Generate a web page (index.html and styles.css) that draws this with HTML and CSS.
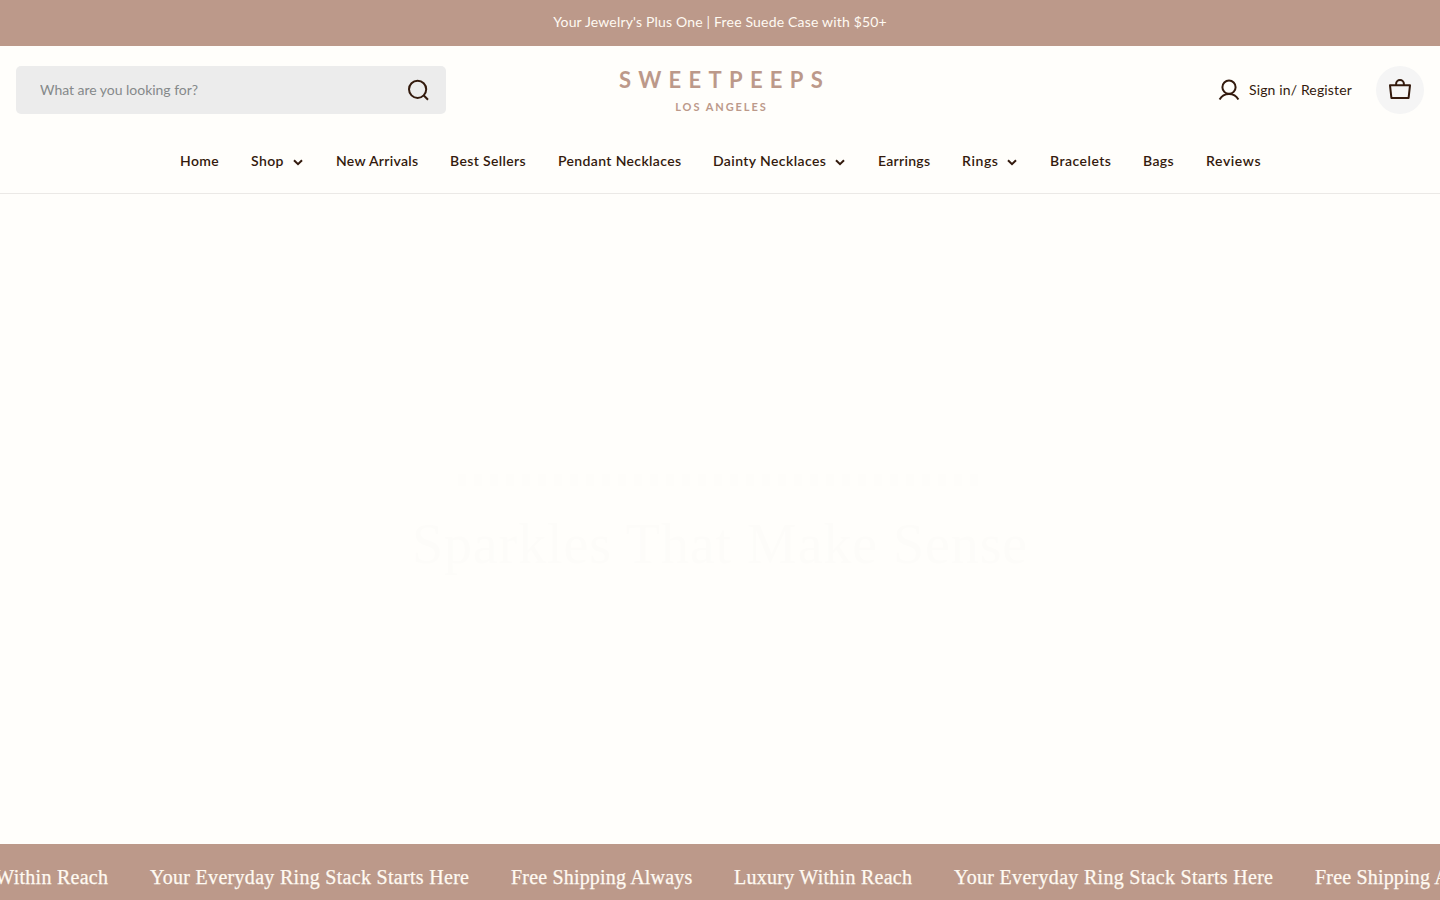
FILE: index.html
```html
<!DOCTYPE html>
<html lang="en">
<head>
<meta charset="utf-8">
<title>Sweetpeeps Los Angeles</title>
<link rel="stylesheet" href="styles.css">
</head>
<body>
<div class="announcement"><span>Your Jewelry's Plus One | Free Suede Case with $50+</span></div>
<header class="header">
  <div class="header-top">
    <form class="search">
      <input class="search-input" type="text" placeholder="What are you looking for?" aria-label="Search">
      <svg class="icon" viewBox="0 0 24 24"><circle cx="11.6" cy="11.3" r="8.6"/><path d="M17.6 17.3 22 21.7"/></svg>
    </form>
    <a class="logo"><span class="logo-name">SWEETPEEPS</span><span class="logo-city">LOS ANGELES</span></a>
    <div class="actions">
      <a class="account">
        <svg class="icon" viewBox="0 0 24 24"><circle cx="12" cy="9.2" r="6.6"/><path d="M2.6 21.4C4.5 18 7.8 15.9 12 15.9S19.5 18 21.4 21.4"/></svg>
        <span class="account-label">Sign in/ Register</span>
      </a>
      <a class="cart"><svg class="icon" viewBox="0 0 24 24"><path d="M2 7.3H22L20.6 19.9H3.4Z"/><path d="M8.1 7.2V6a3.9 3.9 0 0 1 7.8 0v1.2"/></svg></a>
    </div>
  </div>
  <nav class="nav">
    <a class="w-home">Home</a>
    <a class="has-menu"><span class="w-shop">Shop</span><svg class="chevron" viewBox="0 0 10 7"><path d="M1 1.2 5 5.2 9 1.2"/></svg></a>
    <a class="w-new">New Arrivals</a>
    <a class="w-best">Best Sellers</a>
    <a class="w-pendant">Pendant Necklaces</a>
    <a class="has-menu"><span class="w-dainty">Dainty Necklaces</span><svg class="chevron" viewBox="0 0 10 7"><path d="M1 1.2 5 5.2 9 1.2"/></svg></a>
    <a class="w-earrings">Earrings</a>
    <a class="has-menu"><span class="w-rings">Rings</span><svg class="chevron" viewBox="0 0 10 7"><path d="M1 1.2 5 5.2 9 1.2"/></svg></a>
    <a class="w-bracelets">Bracelets</a>
    <a class="w-bags">Bags</a>
    <a class="w-reviews">Reviews</a>
  </nav>
</header>
<main class="hero">
  <div class="hero-line"></div>
  <h1 class="hero-title">Sparkles That Make Sense</h1>
</main>
<div class="marquee">
  <div class="marquee-track">
    <span class="m-luxury">Luxury Within Reach</span>
    <span class="m-ring">Your Everyday Ring Stack Starts Here</span>
    <span class="m-free">Free Shipping Always</span>
    <span class="m-luxury">Luxury Within Reach</span>
    <span class="m-ring">Your Everyday Ring Stack Starts Here</span>
    <span class="m-free">Free Shipping Always</span>
  </div>
</div>
</body>
</html>
```
FILE: styles.css
```css
* { box-sizing: border-box; }
body {
  margin: 0;
  height: 900px;
  overflow: hidden;
  display: flex;
  flex-direction: column;
  background: #fffefb;
  color: #331a0d;
  font-family: Lato, sans-serif;
  font-size: 14px;
}
.announcement {
  height: 46px;
  display: flex;
  align-items: center;
  justify-content: center;
  padding-bottom: 3px;
  background: #bc998a;
  color: #fffaf2;
  letter-spacing: 0.18px;
}
.header { height: 148px; border-bottom: 1px solid #ebe9e6; }
.header-top {
  display: grid;
  grid-template-columns: 430px 1fr 430px;
  align-items: center;
  height: 88px;
  padding: 0 16px;
}
.icon {
  width: 24px;
  height: 24px;
  flex: none;
  fill: none;
  stroke: #331a0d;
  stroke-width: 2;
  stroke-linejoin: round;
}
.search {
  display: flex;
  align-items: center;
  height: 48px;
  margin: 0;
  padding: 0 16px 0 24px;
  border-radius: 5px;
  background: #ececec;
}
.search-input {
  flex: 1;
  padding: 0 0 2px;
  border: 0;
  outline: 0;
  background: none;
  font: inherit;
  letter-spacing: -0.03px;
}
.search-input::placeholder { color: #85898a; opacity: 1; }
.logo {
  display: flex;
  flex-direction: column;
  align-items: center;
  color: #bc998a;
  font-weight: 700;
}
.logo-name { font-size: 22px; line-height: 26px; letter-spacing: 7.3px; margin-right: -9px; }
.logo-city { font-size: 11px; line-height: 14px; letter-spacing: 1.95px; margin: 7px -3px 0 0; }
.actions { display: flex; justify-content: flex-end; align-items: center; gap: 24px; }
.account { display: flex; align-items: center; gap: 8px; }
.account-label { width: 103px; padding-bottom: 2px; white-space: nowrap; letter-spacing: 0.14px; }
.cart {
  display: flex;
  align-items: center;
  justify-content: center;
  width: 48px;
  height: 48px;
  border-radius: 50%;
  background: #f5f5f5;
}
.nav {
  display: flex;
  justify-content: center;
  gap: 32px;
  padding: 17px 0 0 1px;
  line-height: 20px;
  font-weight: 600;
  white-space: nowrap;
}
.has-menu { display: flex; align-items: center; gap: 9px; }
.chevron { width: 10px; height: 7px; margin: 2px 1px 0 0; fill: none; stroke: #331a0d; stroke-width: 2; }
.nav a, .nav span { flex: none; }
.w-home { width: 39px; letter-spacing: 0.4px; }
.w-shop { width: 33px; letter-spacing: 0.4px; }
.w-new { width: 82px; letter-spacing: 0.3px; }
.w-best { width: 76px; letter-spacing: 0.36px; }
.w-pendant { width: 123px; letter-spacing: 0.36px; }
.w-dainty { width: 113px; letter-spacing: 0.4px; }
.w-earrings { width: 52px; letter-spacing: 0.28px; }
.w-rings { width: 36px; letter-spacing: 0.6px; }
.w-bracelets { width: 61px; letter-spacing: 0.48px; }
.w-bags { width: 31px; letter-spacing: 0.4px; }
.w-reviews { width: 55px; letter-spacing: 0.6px; }
.hero {
  flex: 1;
  display: flex;
  flex-direction: column;
  align-items: center;
  padding-top: 280px;
}
.hero-line {
  width: 524px;
  height: 12px;
  background: repeating-linear-gradient(90deg, #fefdfa 0 8px, transparent 8px 16px);
}
.hero-title {
  margin: 26px 0 0;
  color: #fdfcf9;
  font: 400 56px/64px "Liberation Serif", serif;
  letter-spacing: 0.9px;
}
.marquee {
  height: 56px;
  overflow: hidden;
  background: #bc998a;
  color: #fffaf2;
  font: 20px/24px "Liberation Serif", serif;
  -webkit-text-stroke: 0.25px #fffaf2;
}
.marquee-track {
  display: flex;
  gap: 42px;
  width: max-content;
  margin-left: -70px;
  padding-top: 21px;
  white-space: nowrap;
}
.m-luxury { width: 178px; letter-spacing: 0.26px; }
.m-ring { width: 319px; letter-spacing: 0.3px; }
.m-free { width: 181px; letter-spacing: 0.18px; }
```
